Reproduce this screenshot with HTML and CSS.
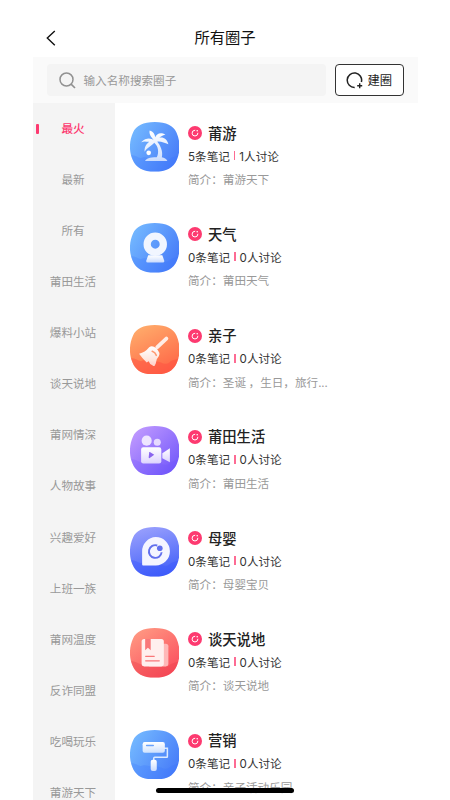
FILE: index.html
```html
<!DOCTYPE html>
<html lang="zh-CN">
<head>
<meta charset="utf-8">
<title>所有圈子</title>
<link rel="stylesheet" href="styles.css">
</head>
<body>
<svg class="defs" width="0" height="0" aria-hidden="true">
  <defs>
    <linearGradient id="blue" x1="0" y1="0.2" x2="1" y2="0.8"><stop offset="0" stop-color="#74b9ff"/><stop offset="1" stop-color="#4579f8"/></linearGradient>
    <linearGradient id="orange" x1="0.2" y1="0" x2="0.7" y2="1"><stop offset="0" stop-color="#ffac6b"/><stop offset="1" stop-color="#ff6546"/></linearGradient>
    <linearGradient id="purple" x1="0" y1="0.1" x2="0.9" y2="1"><stop offset="0" stop-color="#c39cff"/><stop offset="1" stop-color="#6e54fa"/></linearGradient>
    <linearGradient id="indigo" x1="0.3" y1="0" x2="0.6" y2="1"><stop offset="0" stop-color="#989ffd"/><stop offset="1" stop-color="#4260f8"/></linearGradient>
    <linearGradient id="red" x1="0.1" y1="0" x2="0.8" y2="1"><stop offset="0" stop-color="#ff9c84"/><stop offset="1" stop-color="#fb4b5c"/></linearGradient>
    <linearGradient id="white" x1="0" y1="0" x2="0" y2="1"><stop offset="0" stop-color="#fff"/><stop offset="1" stop-color="#fff" stop-opacity=".7"/></linearGradient>
    <path id="blob" d="M24.500 0C36 0 43 3.500 46 10.500C50 19.500 50 29 46.500 37C43 45.500 36 49 24.500 49C13 49 6 45.500 2.500 37C-1 29-1 19.500 3 10.500C6 3.500 13 0 24.500 0Z"/>
    <path id="wave" d="M1 33C5 32 7 35 11 36C15 33 20 37 24 36C31 35 33 41 39 37C42 34 45 35 48 33L46.500 37C43 45.500 36 49 24.500 49C13 49 6 45.500 2.500 37Z"/>
    <symbol id="mark" viewBox="0 0 14 14">
      <circle cx="7" cy="7" r="7" fill="#fd3a70"/>
      <path d="M6.800 4.200A2.900 2.900 0 1 0 9.900 7.200" fill="none" stroke="#fff" stroke-width="1" stroke-linecap="round"/>
      <circle cx="9.200" cy="4.800" r=".8" fill="#fff"/>
    </symbol>
  </defs>
</svg>
<div class="app">
  <header class="titlebar">
    <svg class="back" viewBox="0 0 10 16"><path d="M8.800 1L1.300 8L8.800 15.200" fill="none" stroke="#111" stroke-width="1.400"/></svg>
    <h1>所有圈子</h1>
  </header>
  <div class="toolbar">
    <div class="search">
      <svg class="glass" viewBox="0 0 17 17"><circle cx="7.500" cy="7.500" r="6.500" fill="none" stroke="#919191" stroke-width="1.500"/><path d="M12.100 12.100L16 16" stroke="#919191" stroke-width="1.600"/></svg>
      <span>输入名称搜索圈子</span>
    </div>
    <div class="create">
      <svg class="ring" viewBox="0 0 17 17"><path d="M8.700 15.400A7.200 7.200 0 1 1 15.400 10" fill="none" stroke="#222" stroke-width="1.500"/><path d="M13.700 11.200V16.200M11.200 13.700H16.200" stroke="#222" stroke-width="1.400"/></svg>
      <span>建圈</span>
    </div>
  </div>
  <main class="content">
    <nav class="side">
      <div class="tab active">最火</div><div class="tab">最新</div><div class="tab">所有</div><div class="tab">莆田生活</div><div class="tab">爆料小站</div><div class="tab">谈天说地</div><div class="tab">莆网情深</div><div class="tab">人物故事</div><div class="tab">兴趣爱好</div><div class="tab">上班一族</div><div class="tab">莆网温度</div><div class="tab">反诈同盟</div><div class="tab">吃喝玩乐</div><div class="tab">莆游天下</div>
    </nav>
    <section class="list">
      <article class="row">
        <svg class="icon" viewBox="0 0 49 49"><use href="#blob" fill="url(#blue)"/><use href="#wave" fill="#3973ff" opacity=".25"/>
          <path d="M23.500 18C21 16 16 15 11 20C15 18.500 17 20 19 19.500C16 22 14 25 14.500 29.500C17 25 21 24 24 20.500C28 24 29 30 26.500 35C19 35 16 36.500 15 38.500H37C36 36.500 34 35.500 31.500 35C33 29 30 23 27 19.500C31 19 34 21 38 22C37 17 33 14.500 29 15.500C31 14 32 13 35 12.500C30 9.500 26 12 25 15C24.500 12 23 9.500 19.500 8.500C18.500 12 21 15 23.500 18Z" fill="url(#white)"/><circle cx="18.500" cy="30.500" r="2.300" fill="#fff"/></svg>
        <div class="info"><h2><svg class="mark"><use href="#mark"/></svg><span>莆游</span></h2><p class="stats">5条笔记<i></i>1人讨论</p><p class="desc">简介：莆游天下</p></div>
      </article>
      <article class="row">
        <svg class="icon" viewBox="0 0 49 49"><use href="#blob" fill="url(#blue)"/><use href="#wave" fill="#3973ff" opacity=".25"/>
          <path d="M18 32H32L34 37.500Q34 39 32.500 39H17.500Q16 39 16 37.500Z" fill="url(#white)"/><circle cx="25" cy="21" r="8" fill="none" stroke="#f1f6ff" stroke-width="7.200"/></svg>
        <div class="info"><h2><svg class="mark"><use href="#mark"/></svg><span>天气</span></h2><p class="stats">0条笔记<i></i>0人讨论</p><p class="desc">简介：莆田天气</p></div>
      </article>
      <article class="row">
        <svg class="icon" viewBox="0 0 49 49"><use href="#blob" fill="url(#orange)"/><use href="#wave" fill="#ff4c40" opacity=".45"/>
          <path d="M27 22L36 13.500" stroke="#ffede6" stroke-width="3.800" stroke-linecap="round"/><path d="M19 22Q22 19.500 26 23Q30.500 27.500 28.500 31L26.500 34L25.500 38Q24 42 22.500 40L20 38.500L18.500 36L16.500 37Q12 33 9 28.500Q15 27 19 22Z" fill="url(#white)"/><path d="M22 26Q25 27 26 30" fill="none" stroke="#ff9a71" stroke-width="1.600" stroke-linecap="round"/></svg>
        <div class="info"><h2><svg class="mark"><use href="#mark"/></svg><span>亲子</span></h2><p class="stats">0条笔记<i></i>0人讨论</p><p class="desc">简介：圣诞 ，生日，旅行...</p></div>
      </article>
      <article class="row">
        <svg class="icon" viewBox="0 0 49 49"><use href="#blob" fill="url(#purple)"/><use href="#wave" fill="#6750ff" opacity=".2"/>
          <circle cx="16.500" cy="14.500" r="5" fill="#eee5ff"/><circle cx="27" cy="16" r="3.500" fill="#e6daff"/><rect x="11" y="21" width="20" height="16" rx="2.200" fill="url(#white)"/><path d="M32 27L39.500 22V36L32 32Z" fill="url(#white)"/><path d="M19 26.500Q18.500 25.500 20 26L24 28.500L19.500 31.800Q18.500 32 18.500 31Z" fill="#8a64ee"/></svg>
        <div class="info"><h2><svg class="mark"><use href="#mark"/></svg><span>莆田生活</span></h2><p class="stats">0条笔记<i></i>0人讨论</p><p class="desc">简介：莆田生活</p></div>
      </article>
      <article class="row">
        <svg class="icon" viewBox="0 0 49 49"><use href="#blob" fill="url(#indigo)"/><use href="#wave" fill="#3753ff" opacity=".35"/>
          <path d="M25.500 10A14 14 0 1 1 25.500 38H13Q12 38 12 37V24A14 14 0 0 1 25.500 10Z" fill="#f5f5ff"/><path d="M27 18.300A6.300 6.300 0 1 0 31.300 25" fill="none" stroke="#626fed" stroke-width="1.900"/><circle cx="29.500" cy="21" r="2.800" fill="#626fed"/></svg>
        <div class="info"><h2><svg class="mark"><use href="#mark"/></svg><span>母婴</span></h2><p class="stats">0条笔记<i></i>0人讨论</p><p class="desc">简介：母婴宝贝</p></div>
      </article>
      <article class="row">
        <svg class="icon" viewBox="0 0 49 49"><use href="#blob" fill="url(#red)"/><use href="#wave" fill="#e93d48" opacity=".35"/>
          <rect x="17" y="15.500" width="21" height="22.500" rx="2.500" fill="#ffb8b8"/><rect x="11.500" y="11" width="22" height="27" rx="2.500" fill="#ffefee"/><path d="M15 11H20.500V22L17.700 19.500L15 22Z" fill="#f97779"/><path d="M15.500 28H24M15.500 32.500H29" stroke="#f97779" stroke-width="1.200" stroke-linecap="round"/></svg>
        <div class="info"><h2><svg class="mark"><use href="#mark"/></svg><span>谈天说地</span></h2><p class="stats">0条笔记<i></i>0人讨论</p><p class="desc">简介：谈天说地</p></div>
      </article>
      <article class="row">
        <svg class="icon" viewBox="0 0 49 49"><use href="#blob" fill="url(#blue)"/><use href="#wave" fill="#3973ff" opacity=".25"/>
          <path d="M34 18H37V26.500Q37 27 36.500 27H24.500Q23.500 27 23.500 28V31" fill="none" stroke="#dceaff" stroke-width="1.500"/><rect x="12.500" y="12" width="22" height="10.500" rx="2" fill="url(#white)"/><path d="M16.500 15.300H23" stroke="#69a2fc" stroke-width="1.600" stroke-linecap="round"/><rect x="20.500" y="29.500" width="6" height="11" rx="2" fill="url(#white)"/></svg>
        <div class="info"><h2><svg class="mark"><use href="#mark"/></svg><span>营销</span></h2><p class="stats">0条笔记<i></i>0人讨论</p><p class="desc">简介：亲子活动乐园</p></div>
      </article>
    </section>
  </main>
  <div class="home-indicator"></div>
</div>
</body>
</html>
```
FILE: styles.css
```css
* { box-sizing: border-box; }
body {
  margin: 0;
  background: #fff;
  font-family: "Noto Sans CJK SC", sans-serif;
}
h1, h2, p { margin: 0; }
.defs { display: block; position: absolute; }
.app {
  position: relative;
  width: 385px;
  height: 800px;
  margin: 0 auto;
  overflow: hidden;
  display: flex;
  flex-direction: column;
}
.titlebar {
  flex: none;
  height: 57px;
  padding: 18px 13px 0;
  display: grid;
  grid-template-columns: 20px 1fr 20px;
  align-items: center;
}
.back { width: 10px; height: 16px; }
h1 {
  padding-bottom: 3px;
  text-align: center;
  font-size: 15.3px;
  font-weight: 400;
  line-height: 20px;
  color: #111;
}
.toolbar {
  flex: none;
  height: 46px;
  padding: 7px 14px;
  display: flex;
  gap: 9.500px;
  background: #fafafa;
}
.search {
  flex: 1;
  display: flex;
  align-items: center;
  gap: 8px;
  padding-left: 12px;
  border-radius: 4px;
  background: #f4f4f4;
  color: #999;
  font-size: 11.6px;
}
.glass { width: 17px; height: 17px; }
.create {
  width: 68.500px;
  display: flex;
  align-items: center;
  justify-content: center;
  gap: 4px;
  border: 1px solid #333;
  border-radius: 4px;
  background: #fff;
  color: #222;
  font-size: 12.3px;
}
.ring { width: 17px; height: 17px; }
.content { flex: 1; display: flex; min-height: 0; }
.side {
  flex: none;
  width: 82.500px;
  background: #f4f4f4;
}
.tab {
  position: relative;
  height: 51.070px;
  padding-right: 1.500px;
  line-height: 51px;
  text-align: center;
  font-size: 11.6px;
  color: #999;
}
.tab.active { color: #fd3a70; font-weight: 500; }
.tab.active::before {
  content: "";
  position: absolute;
  left: 3.500px;
  top: 21px;
  width: 3px;
  height: 9.500px;
  border-radius: 1px;
  background: #fd3a70;
}
.list { padding: 19px 0 0 14.500px; }
.row {
  height: 101.300px;
  display: flex;
  gap: 9px;
  white-space: nowrap;
}
.icon { width: 49.500px; height: 49.500px; flex: none; }
h2 {
  display: flex;
  align-items: center;
  gap: 6px;
  height: 22px;
  font-size: 14.3px;
  font-weight: 500;
  color: #222;
}
h2 span { padding-bottom: 2px; }
.mark { width: 14px; height: 14px; }
.stats {
  display: flex;
  align-items: center;
  height: 23px;
  font-family: Inter, "Noto Sans CJK SC", sans-serif;
  font-size: 11.6px;
  color: #333;
}
.stats i {
  width: 1.500px;
  height: 9px;
  margin: 0 4px;
  background: #fd6b93;
}
.desc {
  height: 24px;
  line-height: 24px;
  font-size: 11.6px;
  color: #999;
}
.home-indicator {
  position: absolute;
  left: 123.500px;
  top: 788px;
  width: 138px;
  height: 5px;
  border-radius: 3px;
  background: #000;
}
```
